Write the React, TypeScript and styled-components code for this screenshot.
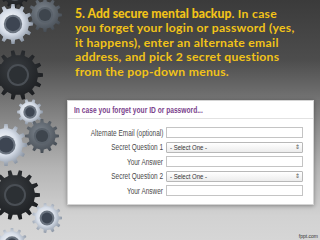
import React from "react";
import styled, { createGlobalStyle } from "styled-components";

const Global = createGlobalStyle`
  html, body { margin: 0; padding: 0; }
  body { width: 320px; height: 240px; overflow: hidden; }
`;

const Slide = styled.div`
  width: 320px;
  height: 240px;
  display: flex;
  background: linear-gradient(180deg, #3b3b3b 0%, #4d4d4d 25%, #7c7c7c 45%, #b4b4b4 70%, #d2d2d2 90%, #d6d6d6 100%);
  overflow: hidden;
`;

const GearColumn = styled.div`
  width: 64px;
  flex: none;
  height: 240px;
  svg { display: block; }
`;

const Content = styled.div`
  flex: 1;
  display: flex;
  flex-direction: column;
  padding-top: 7px;
`;

const Lead = styled.p`
  margin: 0 0 0 11px;
  font-family: Lato, "Open Sans", sans-serif;
  font-size: 12.2px;
  line-height: 14.4px;
  font-weight: 700;
  letter-spacing: 0.28px;
  color: #f2c318;
  white-space: nowrap;
  height: 72px;
`;

const Strong = styled.span`
  font-weight: 900;
  letter-spacing: 0;
`;

const Panel = styled.div`
  margin: 21px 0 0 3px;
  width: 245px;
  background: #ffffff;
  border: 1px solid #d4d4d4;
  box-shadow: 0 1px 4px rgba(0, 0, 0, 0.35);
  display: flex;
  flex-direction: column;
  padding-bottom: 8px;
`;

const PanelHeader = styled.div`
  height: 17px;
  display: flex;
  align-items: center;
  padding-left: 6px;
  border-bottom: 1px solid #e2e2e2;
  margin-bottom: 8px;
`;

const HeaderText = styled.span`
  display: inline-block;
  font-family: "Liberation Sans", Arial, sans-serif;
  font-weight: 700;
  font-size: 9px;
  color: #7b3f8c;
  white-space: nowrap;
  transform: scaleX(0.74);
  transform-origin: left center;
`;

const Form = styled.div`
  display: grid;
  grid-template-columns: 95px 137px;
  column-gap: 3px;
  row-gap: 3.5px;
  align-items: center;
`;

const Label = styled.label`
  display: block;
  text-align: right;
  font-family: "Liberation Sans", Arial, sans-serif;
  font-size: 8.5px;
  color: #4a4a4a;
  white-space: nowrap;
  transform: scaleX(0.76);
  transform-origin: right center;
`;

const TextBox = styled.div`
  height: 9px;
  border: 1px solid #c4c4c4;
  background: #fff;
`;

const SelectBox = styled.div`
  height: 9px;
  border: 1px solid #b8b8b8;
  border-radius: 1px;
  background: linear-gradient(180deg, #ffffff, #ececec);
  display: flex;
  align-items: center;
  justify-content: space-between;
  padding: 0 2px 0 3px;
`;

const SelectText = styled.span`
  display: inline-block;
  font-family: "Liberation Sans", Arial, sans-serif;
  font-size: 7.5px;
  color: #333;
  white-space: nowrap;
  transform: scaleX(0.8);
  transform-origin: left center;
`;

const Arrows = styled.span`
  font-family: "DejaVu Sans", sans-serif;
  font-size: 6px;
  color: #555;
  line-height: 1;
`;

const Footer = styled.div`
  margin-top: auto;
  align-self: flex-end;
  padding: 0 2px 1px 0;
  font-family: "Liberation Sans", sans-serif;
  font-size: 5px;
  color: #333;
`;

function gearPath(cx: number, cy: number, r: number, teeth: number, depth: number) {
  const pts: string[] = [];
  const step = (Math.PI * 2) / teeth;
  const ri = r - depth;
  for (let i = 0; i < teeth; i++) {
    const a = i * step;
    const seq: [number, number][] = [
      [a - step * 0.25, ri],
      [a - step * 0.15, r],
      [a + step * 0.15, r],
      [a + step * 0.25, ri],
    ];
    for (const [ang, rad] of seq) {
      pts.push(`${(cx + Math.cos(ang) * rad).toFixed(2)},${(cy + Math.sin(ang) * rad).toFixed(2)}`);
    }
  }
  return "M" + pts.join("L") + "Z";
}

type GearKind = "light" | "gray" | "dark";
type GearSpec = { cx: number; cy: number; r: number; teeth: number; kind: GearKind };

const gears: GearSpec[] = [
  { cx: 15, cy: -6, r: 14, teeth: 12, kind: "dark" },
  { cx: 45, cy: 15, r: 17, teeth: 12, kind: "gray" },
  { cx: 13, cy: 24, r: 20, teeth: 12, kind: "light" },
  { cx: 18, cy: 75, r: 25, teeth: 14, kind: "dark" },
  { cx: 30, cy: 112, r: 13, teeth: 10, kind: "light" },
  { cx: 42, cy: 136, r: 17, teeth: 12, kind: "gray" },
  { cx: 6, cy: 145, r: 21, teeth: 12, kind: "light" },
  { cx: 15, cy: 195, r: 25, teeth: 14, kind: "dark" },
  { cx: 47, cy: 218, r: 15, teeth: 11, kind: "light" },
  { cx: 12, cy: 244, r: 16, teeth: 12, kind: "light" },
];

function Gears() {
  return (
    <svg width="64" height="240" viewBox="0 0 64 240">
      <defs>
        <radialGradient id="g-light" cx="0.45" cy="0.45" r="0.6">
          <stop offset="0" stopColor="#ffffff" />
          <stop offset="0.5" stopColor="#d6dde8" />
          <stop offset="1" stopColor="#7f8a99" />
        </radialGradient>
        <radialGradient id="g-gray" cx="0.45" cy="0.4" r="0.6">
          <stop offset="0" stopColor="#7f8790" />
          <stop offset="1" stopColor="#464d55" />
        </radialGradient>
        <radialGradient id="g-dark" cx="0.45" cy="0.4" r="0.6">
          <stop offset="0" stopColor="#3a3e42" />
          <stop offset="1" stopColor="#1c1e21" />
        </radialGradient>
      </defs>
      {gears.map((g, i) => {
        const hub = g.r * 0.36;
        const ring = g.kind === "light" ? "#6b7480" : g.kind === "gray" ? "#5a626b" : "#4a4f55";
        const core = g.kind === "light" ? "#3d4552" : g.kind === "gray" ? "#3e454d" : "#2c3034";
        return (
          <g key={i}>
            <path d={gearPath(g.cx, g.cy, g.r, g.teeth, g.r * 0.2)} fill={`url(#g-${g.kind})`} />
            <circle cx={g.cx} cy={g.cy} r={hub + 2} fill={ring} />
            <circle cx={g.cx} cy={g.cy} r={hub} fill={core} />
          </g>
        );
      })}
    </svg>
  );
}

const rows: { label: string; select?: boolean }[] = [
  { label: "Alternate Email (optional)" },
  { label: "Secret Question 1", select: true },
  { label: "Your Answer" },
  { label: "Secret Question 2", select: true },
  { label: "Your Answer" },
];

export default function App() {
  return (
    <>
      <Global />
      <Slide>
        <GearColumn>
          <Gears />
        </GearColumn>
        <Content>
          <Lead>
            <Strong>5. Add secure mental backup</Strong>. In case
            <br />
            you forget your login or password (yes,
            <br />
            it happens), enter an alternate email
            <br />
            address, and pick 2 secret questions
            <br />
            from the pop-down menus.
          </Lead>
          <Panel>
            <PanelHeader>
              <HeaderText>In case you forget your ID or password...</HeaderText>
            </PanelHeader>
            <Form>
              {rows.map((r, i) => (
                <React.Fragment key={i}>
                  <Label>{r.label}</Label>
                  {r.select ? (
                    <SelectBox>
                      <SelectText>- Select One -</SelectText>
                      <Arrows>⇕</Arrows>
                    </SelectBox>
                  ) : (
                    <TextBox />
                  )}
                </React.Fragment>
              ))}
            </Form>
          </Panel>
          <Footer>fppt.com</Footer>
        </Content>
      </Slide>
    </>
  );
}
